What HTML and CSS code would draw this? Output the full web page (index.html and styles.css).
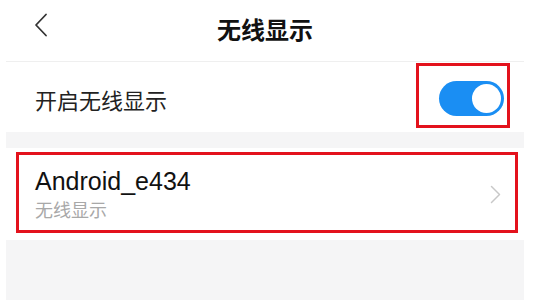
FILE: index.html
```html
<!DOCTYPE html>
<html lang="zh-CN">
<head>
    <meta charset="UTF-8">
    <meta name="viewport" content="width=device-width, initial-scale=1.0">
    <title>无线显示</title>
    <link rel="stylesheet" href="styles.css">
</head>
<body>

<div class="screen">
    <div class="header">
        <span class="back">
            <svg width="14" height="24" viewBox="0 0 14 24">
                <path d="M12 1.5 L2 12 L12 22.5" fill="none" stroke="#333" stroke-width="1.8" stroke-linecap="round" stroke-linejoin="round"/>
            </svg>
        </span>
        <div class="title">无线显示</div>
    </div>

    <div class="switch-row">
        <span class="switch-label">开启无线显示</span>
        <span class="toggle on"><span class="knob"></span></span>
        <div class="mark"></div>
    </div>

    <div class="device-row">
        <div class="device-box">
            <div class="device-text">
                <div class="device-name">Android_e434</div>
                <div class="device-sub">无线显示</div>
            </div>
            <svg class="arrow" width="11" height="19" viewBox="0 0 11 19">
                <path d="M1.5 1.5 L9.5 9.5 L1.5 17.5" fill="none" stroke="#c8c8c8" stroke-width="1.5" stroke-linecap="round" stroke-linejoin="round"/>
            </svg>
        </div>
    </div>
</div>

</body>
</html>
```

FILE: styles.css
```css
body {
    margin: 0;
    background: #fff;
    font-family: "Liberation Sans", "Noto Sans CJK SC", sans-serif;
}
.screen {
    margin-left: 6px;
    width: 518px;
    height: 300px;
    background: #f5f5f6;
    overflow: hidden;
}
.header {
    position: relative;
    height: 61px;
    background: #fff;
    border-bottom: 1px solid #efefef;
    display: flex;
    align-items: center;
    justify-content: center;
    padding-bottom: 8px;
    box-sizing: content-box;
    height: 53px;
}
.back {
    position: absolute;
    left: 28px;
    top: 13px;
}
.title {
    font-family: "Noto Sans CJK SC", sans-serif;
    font-size: 24px;
    font-weight: bold;
    color: #111;
    padding-top: 4px;
}
.switch-row {
    position: relative;
    height: 70px;
    background: #fff;
    display: flex;
    align-items: center;
    justify-content: space-between;
    padding: 0 20px 0 29px;
}
.switch-label {
    font-family: "Noto Sans CJK SC", sans-serif;
    font-size: 22px;
    color: #222;
    margin-top: 3px;
}
.toggle {
    position: relative;
    width: 65px;
    height: 35px;
    border-radius: 18px;
    background: #ccc;
    margin-top: 3px;
}
.toggle.on {
    background: #1a8ef3;
}
.knob {
    position: absolute;
    top: 3px;
    right: 3px;
    width: 29px;
    height: 29px;
    border-radius: 50%;
    background: #fff;
}
.mark {
    position: absolute;
    left: 410px;
    top: 1px;
    width: 94px;
    height: 65px;
    border: 3px solid #e3121c;
    box-sizing: border-box;
}
.device-row {
    margin-top: 16px;
    background: #fff;
    padding: 4px 6px 7px 10px;
}
.device-box {
    height: 81px;
    border: 3px solid #e3121c;
    box-sizing: border-box;
    display: flex;
    align-items: center;
    justify-content: space-between;
    padding: 0 14px 0 16px;
}
.device-name {
    font-size: 25px;
    line-height: 30px;
    color: #111;
}
.device-sub {
    font-family: "Noto Sans CJK SC", sans-serif;
    font-size: 18px;
    line-height: 22px;
    color: #a8a8a8;
    margin-top: 2px;
}
.arrow {
    margin-top: 4px;
}
```
